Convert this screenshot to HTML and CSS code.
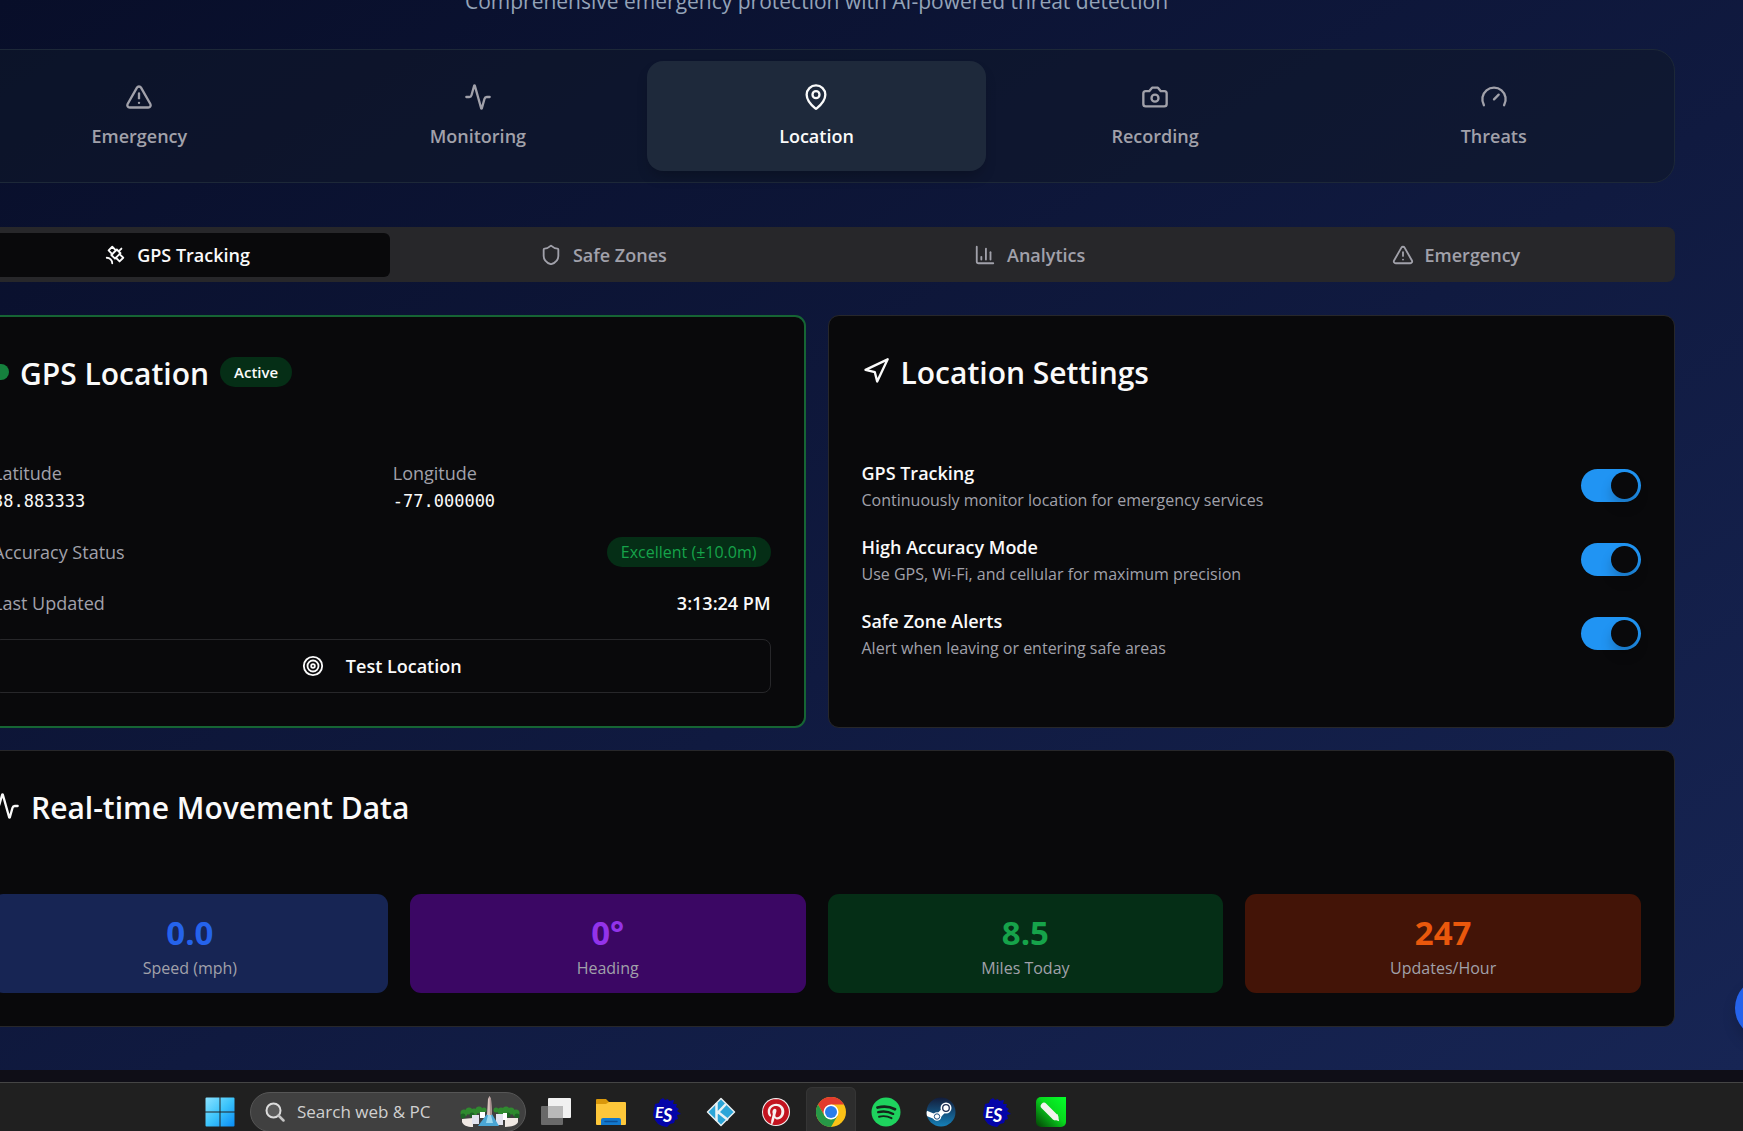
FILE: index.html
```html
<!DOCTYPE html>
<html lang="en">
<head>
<meta charset="utf-8">
<meta name="viewport" content="width=device-width, initial-scale=1">
<title>Safety Center - Location</title>
<link rel="stylesheet" href="styles.css">
</head>
<body>
<svg class="defs" aria-hidden="true">
  <symbol id="i-alert" viewBox="0 0 24 24"><path d="m21.73 18-8-14a2 2 0 0 0-3.48 0l-8 14A2 2 0 0 0 4 21h16a2 2 0 0 0 1.73-3Z"/><path d="M12 9v4"/><path d="M12 17h.01"/></symbol>
  <symbol id="i-activity" viewBox="0 0 24 24"><path d="M22 12h-2.48a2 2 0 0 0-1.93 1.46l-2.35 8.36a.25.25 0 0 1-.48 0L9.24 2.18a.25.25 0 0 0-.48 0l-2.35 8.36A2 2 0 0 1 4.49 12H2"/></symbol>
  <symbol id="i-pin" viewBox="0 0 24 24"><path d="M20 10c0 4.993-5.539 10.193-7.399 11.799a1 1 0 0 1-1.202 0C9.539 20.193 4 14.993 4 10a8 8 0 0 1 16 0"/><circle cx="12" cy="10" r="3"/></symbol>
  <symbol id="i-camera" viewBox="0 0 24 24"><path d="M14.500 4h-5L7 7H4a2 2 0 0 0-2 2v9a2 2 0 0 0 2 2h16a2 2 0 0 0 2-2V9a2 2 0 0 0-2-2h-3l-2.500-3z"/><circle cx="12" cy="13" r="3"/></symbol>
  <symbol id="i-gauge" viewBox="0 0 24 24"><path d="m12 14 4-4"/><path d="M3.340 19a10 10 0 1 1 17.320 0"/></symbol>
  <symbol id="i-satellite" viewBox="0 0 24 24"><path d="M13 7 9 3 5 7l4 4"/><path d="m17 11 4 4-4 4-4-4"/><path d="m8 12 4 4 6-6-4-4Z"/><path d="m16 8 3-3"/><path d="M9 21a6 6 0 0 0-6-6"/></symbol>
  <symbol id="i-shield" viewBox="0 0 24 24"><path d="M20 13c0 5-3.500 7.500-7.660 8.950a1 1 0 0 1-.67-.01C7.500 20.500 4 18 4 13V6a1 1 0 0 1 1-1c2 0 4.500-1.200 6.240-2.720a1.170 1.170 0 0 1 1.520 0C14.510 3.810 17 5 19 5a1 1 0 0 1 1 1z"/></symbol>
  <symbol id="i-chart" viewBox="0 0 24 24"><path d="M3 3v16a2 2 0 0 0 2 2h16"/><path d="M18 17V9"/><path d="M13 17V5"/><path d="M8 17v-3"/></symbol>
  <symbol id="i-nav" viewBox="0 0 24 24"><path d="M3 11 22 2 13 21 11 13 3 11Z"/></symbol>
  <symbol id="i-target" viewBox="0 0 24 24"><circle cx="12" cy="12" r="10"/><circle cx="12" cy="12" r="6"/><circle cx="12" cy="12" r="2"/></symbol>
  <symbol id="i-es" viewBox="0 0 30 30">
    <path fill="#0404a8" d="M12 1l2 2 3-1 1 2 5-1-1 4 4 0-1 3 3 2-2 2 4 3-4 1 1 4-3 1-1 3-4 1-3 3-5-1-4-2-3-4-2-5 1-6 1-5 4-1 1-3z"/>
    <text x="4" y="21" fill="#fff" font-family="Lato, sans-serif" font-size="16" font-style="italic" font-weight="700">E</text>
    <text x="12" y="25" fill="#fff" font-family="Lato, sans-serif" font-size="18" font-style="italic" font-weight="700">S</text>
  </symbol>
</svg>

<div class="page">
  <main class="content">
    <p class="subtitle">Comprehensive emergency protection with AI-powered threat detection</p>

    <nav class="main-nav" aria-label="Sections">
      <button class="nav-item"><svg class="icon lg"><use href="#i-alert"/></svg>Emergency</button>
      <button class="nav-item"><svg class="icon lg"><use href="#i-activity"/></svg>Monitoring</button>
      <button class="nav-item active"><svg class="icon lg"><use href="#i-pin"/></svg>Location</button>
      <button class="nav-item"><svg class="icon lg"><use href="#i-camera"/></svg>Recording</button>
      <button class="nav-item"><svg class="icon lg"><use href="#i-gauge"/></svg>Threats</button>
    </nav>

    <div class="sub-tabs" role="tablist">
      <button class="sub-tab active" role="tab" aria-selected="true"><svg class="icon"><use href="#i-satellite"/></svg>GPS Tracking</button>
      <button class="sub-tab" role="tab"><svg class="icon"><use href="#i-shield"/></svg>Safe Zones</button>
      <button class="sub-tab" role="tab"><svg class="icon"><use href="#i-chart"/></svg>Analytics</button>
      <button class="sub-tab" role="tab"><svg class="icon"><use href="#i-alert"/></svg>Emergency</button>
    </div>

    <div class="card-grid">
      <section class="card live">
        <div class="card-head"><span class="dot"></span><h2>GPS Location</h2><span class="badge">Active</span></div>
        <div class="gps-body">
          <dl class="coords">
            <div><dt>Latitude</dt><dd class="mono">38.883333</dd></div>
            <div><dt>Longitude</dt><dd class="mono">-77.000000</dd></div>
          </dl>
          <div class="row"><span class="muted">Accuracy Status</span><span class="badge good">Excellent (±10.0m)</span></div>
          <div class="row"><span class="muted">Last Updated</span><span class="strong">3:13:24 PM</span></div>
          <button class="outline-btn"><svg class="icon"><use href="#i-target"/></svg>Test Location</button>
        </div>
      </section>

      <section class="card">
        <div class="card-head"><svg class="icon lg"><use href="#i-nav"/></svg><h2>Location Settings</h2></div>
        <div class="settings">
          <div class="setting">
            <div><label class="strong" for="s1">GPS Tracking</label><p class="hint">Continuously monitor location for emergency services</p></div>
            <input class="switch" type="checkbox" role="switch" id="s1" checked>
          </div>
          <div class="setting">
            <div><label class="strong" for="s2">High Accuracy Mode</label><p class="hint">Use GPS, Wi-Fi, and cellular for maximum precision</p></div>
            <input class="switch" type="checkbox" role="switch" id="s2" checked>
          </div>
          <div class="setting">
            <div><label class="strong" for="s3">Safe Zone Alerts</label><p class="hint">Alert when leaving or entering safe areas</p></div>
            <input class="switch" type="checkbox" role="switch" id="s3" checked>
          </div>
        </div>
      </section>
    </div>

    <section class="card">
      <div class="card-head"><svg class="icon lg"><use href="#i-activity"/></svg><h2>Real-time Movement Data</h2></div>
      <div class="stats">
        <div class="stat blue"><div class="value">0.0</div><div class="hint">Speed (mph)</div></div>
        <div class="stat purple"><div class="value">0°</div><div class="hint">Heading</div></div>
        <div class="stat green"><div class="value">8.5</div><div class="hint">Miles Today</div></div>
        <div class="stat orange"><div class="value">247</div><div class="hint">Updates/Hour</div></div>
      </div>
    </section>
  </main>
  <button class="fab" aria-label="Open chat"></button>
</div>

<div class="window-edge"></div>

<footer class="taskbar">
  <button class="task" aria-label="Start">
    <svg viewBox="0 0 30 30"><defs><linearGradient id="win" x1="0" y1="0" x2="1" y2="1"><stop offset="0" stop-color="#8be2ff"/><stop offset=".5" stop-color="#3cc4fb"/><stop offset="1" stop-color="#0a8cf5"/></linearGradient></defs><path fill="url(#win)" d="M1.500.500H14.500V14.500H.500V1.500a1 1 0 0 1 1-1ZM15.500.500h13a1 1 0 0 1 1 1v13h-14ZM.500 15.500h14v14h-13a1 1 0 0 1-1-1ZM15.500 15.500h14v13a1 1 0 0 1-1 1h-13Z"/></svg>
  </button>
  <div class="search">
    <svg class="lens" viewBox="0 0 20 20"><circle cx="8.500" cy="8.500" r="7" fill="#5c5c5c" stroke="#dcdcdc" stroke-width="2"/><path d="m13.500 13.500 5 5" stroke="#c4c4c4" stroke-width="2.500" stroke-linecap="round"/></svg>
    <input type="text" aria-label="Search" placeholder="Search web &amp; PC">
    <svg class="scene" viewBox="0 0 60 32">
      <g fill="#2f8a2f"><circle cx="4" cy="17" r="3.500"/><circle cx="9" cy="15" r="3.500"/><circle cx="14" cy="16" r="3.500"/><circle cx="19" cy="14" r="3.500"/><circle cx="24" cy="14" r="2.500"/><circle cx="36" cy="14" r="2.500"/><circle cx="41" cy="15" r="3.500"/><circle cx="46" cy="14" r="3.500"/><circle cx="51" cy="15" r="3.500"/><circle cx="56" cy="17" r="3.500"/></g>
      <g fill="#1d6425"><circle cx="3" cy="20" r="2.500"/><circle cx="12" cy="19" r="2.500"/><circle cx="48" cy="19" r="2.500"/><circle cx="57" cy="20" r="2.500"/></g>
      <path fill="#f0e9e4" d="M2 23l11-1v9C7 31 3 29 2 26ZM45 22l13 0v4c-1 3-6 5-13 5Z"/>
      <path fill="#e2e3ee" d="M12 19h7v9h-7ZM36 18h7v11h-7Z"/><path fill="#fff" d="M20 16h5v6h-5ZM43 17h4v7h-4Z"/>
      <path fill="#4aa6d4" d="M27 18h5l7 12H18Z"/><path fill="#9bd8ee" d="M28 19h3l2 8h-7Z"/>
      <path fill="#d9c3bf" d="M28 3l1.500-3L31 3l1 16h-5Z"/><path fill="#a9908f" d="M29.500 0 31 3l1 16h-2Z"/>
    </svg>
  </div>
  <button class="task" aria-label="Task view"><svg viewBox="0 0 30 30"><rect x="7" y="1" width="23" height="20" rx="1" fill="#f1f1f1"/><rect x="0" y="9" width="22" height="19" rx="1" fill="#777" fill-opacity=".85"/><rect x="7" y="9" width="15" height="12" fill="#b9b9b9"/></svg></button>
  <button class="task" aria-label="File Explorer"><svg viewBox="0 0 30 30"><path fill="#d9980b" d="M0 3a1 1 0 0 1 1-1h9l3 3v5H0Z"/><path fill="#fdc73a" d="M0 7h10l3-2h16a1 1 0 0 1 1 1v21a1 1 0 0 1-1 1H1a1 1 0 0 1-1-1Z"/><path fill="#1379cd" d="M5 28v-5a2 2 0 0 1 2-2h16a2 2 0 0 1 2 2v5Z"/><path d="M9 24.500h12" stroke="#0b4f96" stroke-width="1.500" stroke-linecap="round"/></svg></button>
  <button class="task" aria-label="ES"><svg><use href="#i-es"/></svg></button>
  <button class="task" aria-label="Kodi"><svg viewBox="0 0 30 30"><path fill="#2ba5d8" stroke="#e8eef0" stroke-width="1.500" stroke-linejoin="round" d="M15 1.500 28.500 15 15 28.500 1.500 15Z"/><path fill="none" stroke="#e8f2f5" stroke-width="2.500" d="M10.500 6v18M11 16.500l9-9.500M12 15l10 8"/></svg></button>
  <button class="task" aria-label="Pinterest"><svg viewBox="0 0 30 30"><circle cx="15" cy="15" r="14" fill="#f6f0f0"/><path fill="#c3131f" transform="translate(2 2) scale(1.083)" d="M12.017 0C5.396 0 .029 5.367.029 11.987c0 5.079 3.158 9.417 7.618 11.162-.105-.949-.199-2.403.041-3.439.219-.937 1.406-5.957 1.406-5.957s-.359-.72-.359-1.781c0-1.663.967-2.911 2.168-2.911 1.024 0 1.518.769 1.518 1.688 0 1.029-.653 2.567-.992 3.992-.285 1.193.6 2.165 1.775 2.165 2.128 0 3.768-2.245 3.768-5.487 0-2.861-2.063-4.869-5.008-4.869-3.410 0-5.409 2.562-5.409 5.199 0 1.033.394 2.143.889 2.741.099.12.112.225.085.345-.09.375-.293 1.199-.334 1.363-.053.225-.172.271-.401.165-1.495-.69-2.433-2.878-2.433-4.646 0-3.776 2.748-7.252 7.920-7.252 4.158 0 7.392 2.967 7.392 6.923 0 4.135-2.607 7.462-6.233 7.462-1.214 0-2.354-.629-2.758-1.379l-.749 2.848c-.269 1.045-1.004 2.352-1.498 3.146 1.123.345 2.306.535 3.550.535 6.607 0 11.985-5.365 11.985-11.987C23.970 5.390 18.592.026 11.985.026Z"/></svg></button>
  <button class="task current" aria-label="Chrome"><svg viewBox="0 0 30 30"><circle cx="15" cy="15" r="15" fill="#fbc116"/><path fill="#e33b2e" d="M2 7.500A15 15 0 0 1 28 7.500H15L8.500 18.750Z"/><path fill="#279847" d="M2 7.500A15 15 0 0 0 15 30l6.500-11.250L15 22.500l-6.500-3.750Z"/><circle cx="15" cy="15" r="7.500" fill="#fff"/><circle cx="15" cy="15" r="6" fill="#2a7de9"/></svg></button>
  <button class="task" aria-label="Spotify"><svg viewBox="0 0 30 30"><circle cx="15" cy="15" r="14.500" fill="#1ed35e"/><path fill="none" stroke="#14251a" stroke-linecap="round" d="M6.500 10.500c6-1.600 12-1.200 17.500 1.700" stroke-width="2.800"/><path fill="none" stroke="#14251a" stroke-linecap="round" d="M7.200 15.200c5-1.300 10.200-.8 15 1.700" stroke-width="2.300"/><path fill="none" stroke="#14251a" stroke-linecap="round" d="M8 19.700c4.300-1 8.600-.6 12.500 1.500" stroke-width="1.900"/></svg></button>
  <button class="task" aria-label="Steam"><svg viewBox="0 0 30 30"><defs><linearGradient id="steam" x1="0" y1="0" x2="0" y2="1"><stop offset="0" stop-color="#131c3a"/><stop offset="1" stop-color="#1580b8"/></linearGradient><clipPath id="steam-c"><circle cx="15" cy="15" r="14.500"/></clipPath></defs><circle cx="15" cy="15" r="14.500" fill="url(#steam)"/><g clip-path="url(#steam-c)"><path d="M0 16l11 4.500 8.500-9" fill="none" stroke="#fff" stroke-width="5" stroke-linejoin="round"/><circle cx="20" cy="11" r="5.500" fill="#fff"/><circle cx="11" cy="19.500" r="4.300" fill="#fff"/></g><circle cx="20" cy="11" r="3.300" fill="#fff" stroke="#1b2c50" stroke-width="1.300"/><circle cx="11" cy="19.500" r="2.700" fill="none" stroke="#1b4d7c" stroke-width="1"/></svg></button>
  <button class="task" aria-label="ES"><svg><use href="#i-es"/></svg></button>
  <button class="task" aria-label="Editor"><svg viewBox="0 0 30 30"><defs><linearGradient id="pen" x1="1" y1="0" x2="0" y2="1"><stop offset="0" stop-color="#04ff2a"/><stop offset=".45" stop-color="#08d81e"/><stop offset="1" stop-color="#043f05"/></linearGradient></defs><path fill="url(#pen)" d="M5 0h25v25a5 5 0 0 1-5 5H5a5 5 0 0 1-5-5V5a5 5 0 0 1 5-5Z"/><path d="M8 9 19 20" stroke="#f2f2ee" stroke-width="6.500" stroke-linecap="round"/><path fill="#f2f2ee" d="M21.500 17l1.700 7.200-6.700-2.200Z"/></svg></button>
</footer>
</body>
</html>
```

FILE: styles.css
```css
:root {
  --text-xs: 16px;
  --text-sm: 18px;
  --text-title: 30px;
  --text-value: 33px;
  --muted: #a1a1aa;
  --text: #fafafa;
  --card: #09090b;
  --line: #27272a;
}

* { box-sizing: border-box; }

html { overflow: hidden; }

body {
  margin: 0;
  background: #202020;
  color: var(--text);
  font-family: "Open Sans", "Noto Sans", sans-serif;
  font-size: var(--text-sm);
  line-height: 28px;
}

p, h2, dl, dd { margin: 0; }

button {
  border: 0;
  background: none;
  color: inherit;
  font: inherit;
}

.defs { position: absolute; width: 0; height: 0; }

.icon {
  flex: none;
  width: 22px;
  height: 22px;
  fill: none;
  stroke: currentColor;
  stroke-width: 2;
  stroke-linecap: round;
  stroke-linejoin: round;
}

.icon.lg { width: 28px; height: 28px; }

.page {
  position: relative;
  overflow: hidden;
  padding: 0 68px 43px 0;
  background: linear-gradient(to bottom right, #080e29, #101a40 55%, #172554);
}

/* The content column is scrolled left and down inside the window. */
.content {
  display: flex;
  flex-direction: column;
  gap: 22px;
  margin: -18px 0 0 -42px;
}

.subtitle {
  margin-bottom: 7px;
  color: #94a3b8;
  font-size: 21px;
  line-height: 38px;
  text-align: center;
}

.main-nav {
  display: grid;
  grid-template-columns: repeat(5, 1fr);
  padding: 11px;
  border: 1px solid #1d2838;
  border-radius: 22px;
  background: rgba(15, 23, 42, .6);
}

.nav-item {
  display: flex;
  flex-direction: column;
  align-items: center;
  gap: 11px;
  padding: 22px 16px 21px;
  border-radius: 16px;
  color: var(--muted);
  font-weight: 600;
}

.nav-item.active {
  background: #1e293b;
  box-shadow: 0 8px 14px -4px rgba(0, 0, 0, .25);
  color: var(--text);
}

.sub-tabs {
  display: grid;
  grid-template-columns: repeat(4, 1fr);
  margin: 22px 0 11px;
  padding: 6px 6px 5px;
  border-radius: 8px;
  background: var(--line);
}

.sub-tab {
  display: flex;
  align-items: center;
  justify-content: center;
  gap: 11px;
  padding: 8px 16px;
  border-radius: 6px;
  color: var(--muted);
  font-weight: 600;
}

.sub-tab.active { background: var(--card); color: var(--text); }

.card-grid {
  display: grid;
  grid-template-columns: 1fr 1fr;
  gap: 22px;
}

.card {
  padding: 33px;
  border: 1px solid var(--line);
  border-radius: 11px;
  background: var(--card);
}

.card.live { border: 2px solid #166534; }

.card-head {
  display: flex;
  align-items: center;
  gap: 11px;
  margin-bottom: 66px;
}

.card-head h2 {
  padding-top: 4px;
  font-size: var(--text-title);
  font-weight: 600;
  line-height: 40px;
}

.card-head .badge { font-size: 15px; }

.dot {
  width: 16px;
  height: 16px;
  border-radius: 50%;
  background: #15803d;
}

.badge {
  padding: 0 14px;
  border-radius: 15px;
  background: #052e16;
  font-size: var(--text-xs);
  font-weight: 600;
  line-height: 30px;
}

.badge.good { color: #16a34a; font-weight: 500; }

.gps-body, .settings {
  display: flex;
  flex-direction: column;
  gap: 22px;
}

.coords {
  display: grid;
  grid-template-columns: 1fr 1fr;
  gap: 22px;
}

.coords dt, .muted, .hint { color: var(--muted); }

.coords dt { line-height: 27px; }

.mono {
  font-family: "DejaVu Sans Mono", monospace;
  font-size: 17px;
}

.strong { font-weight: 600; }

.row {
  display: flex;
  align-items: center;
  justify-content: space-between;
}

.outline-btn {
  display: flex;
  align-items: center;
  justify-content: center;
  gap: 22px;
  padding: 12px;
  border: 1px solid var(--line);
  border-radius: 8px;
  font-weight: 600;
}

.setting {
  display: flex;
  align-items: center;
  justify-content: space-between;
}

.setting label { display: block; }

.hint { margin-top: 2px; font-size: var(--text-xs); line-height: 22px; }

.switch {
  display: flex;
  justify-content: flex-end;
  width: 60px;
  height: 33px;
  margin: 0;
  padding: 3px;
  border-radius: 17px;
  background: #2094f3;
  appearance: none;
}

.switch::before {
  content: "";
  width: 27px;
  height: 27px;
  border-radius: 50%;
  background: var(--card);
  box-shadow: 0 8px 12px rgba(0, 0, 0, .2);
}

.switch:not(:checked) { justify-content: flex-start; background: var(--line); }

.stats {
  display: grid;
  grid-template-columns: repeat(4, 1fr);
  gap: 22px;
}

.stat {
  padding: 17px 16px 14px;
  border-radius: 11px;
  text-align: center;
}

.value { font-size: var(--text-value); font-weight: 700; line-height: 44px; }

.blue { background: #172554; }
.blue .value { color: #2563eb; }
.purple { background: #3b0764; }
.purple .value { color: #9333ea; }
.green { background: #052e16; }
.green .value { color: #16a34a; }
.orange { background: #431407; }
.orange .value { color: #ea580c; }

.fab {
  position: absolute;
  right: -52px;
  bottom: 32px;
  width: 60px;
  height: 60px;
  border-radius: 50%;
  background: #2563eb;
  box-shadow: 0 8px 14px rgba(0, 0, 0, .15);
}

.window-edge { height: 12px; background: #0f0e17; }

.taskbar {
  display: flex;
  gap: 5px;
  padding: 4px 0 0 195px;
  border-top: 1px solid #454545;
  background: #202020;
}

.task {
  display: grid;
  place-items: center;
  width: 50px;
  height: 50px;
  padding: 0;
  border-radius: 6px;
}

.task svg { width: 30px; height: 30px; }

.task.current { background: #2d2d2d; box-shadow: inset 0 0 0 1px #353535; }

.search {
  display: flex;
  align-items: center;
  width: 276px;
  height: 40px;
  margin-top: 5px;
  padding: 0 5px 0 14px;
  border: 1px solid #565656;
  border-radius: 20px;
  background: #404040;
}

.lens { flex: none; width: 20px; height: 20px; fill: none; }

.search input {
  flex: 1;
  min-width: 0;
  padding: 0 0 0 12px;
  border: 0;
  background: none;
  color: #d6d6d6;
  font: inherit;
  font-size: 17px;
}

.search input::placeholder { color: #d0d0d0; opacity: 1; }

.scene { flex: none; width: 60px; height: 32px; }
```
